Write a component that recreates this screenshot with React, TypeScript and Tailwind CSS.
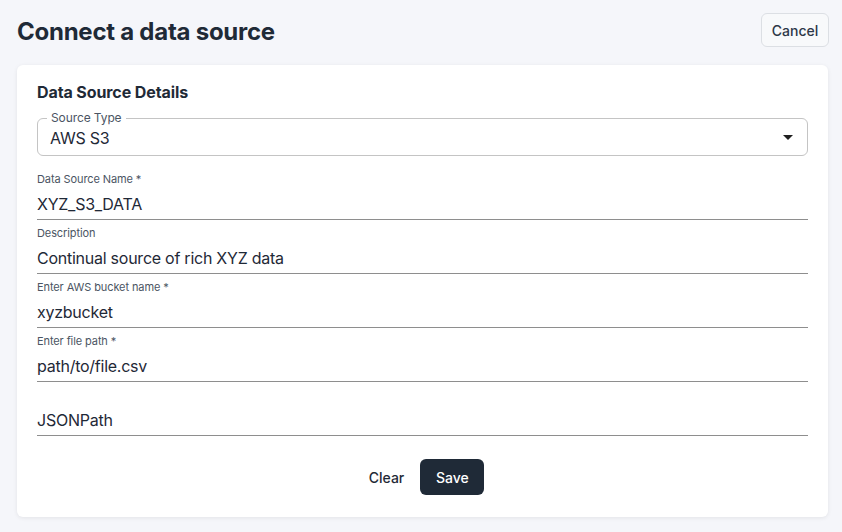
import { useState } from "react";

function Field({ label, value, required, placeholder }: { label?: string; value: string; required?: boolean; placeholder?: string }) {
    const [val, setVal] = useState(value);
    return (
        <div className="h-[54px] pt-[6px] flex flex-col">
            <div className="h-[14px] text-[11px] leading-[14px] tracking-[-0.1px] text-[#4b5563]">
                {label}{required && <span> *</span>}
            </div>
            <input
                value={val}
                placeholder={placeholder}
                onChange={(e) => setVal(e.target.value)}
                className="h-[34px] pt-[3px] w-full bg-transparent text-[16px] tracking-[-0.25px] text-[#1f2937] placeholder:text-[#1f2937] border-b border-[#8e8e8e] focus:outline-none"
            />
        </div>
    );
}

export default function App() {
    return (
        <div className="min-h-screen bg-[#f5f6fa] pl-[17px] pr-[13px] pt-[13px] pb-[15px] font-['Inter',sans-serif] text-[#1f2a37]">
            <div className="flex items-center justify-between h-[34px]">
                <h1 className="text-[24px] font-bold tracking-[-0.25px] mt-[3px]">Connect a data source</h1>
                <button className="h-[34px] w-[68px] border border-[#dcdfe4] rounded-md bg-[#f8f9fb] text-[14px] font-medium text-[#2d3748]">
                    Cancel
                </button>
            </div>

            <div className="mt-[18px] bg-white rounded-md shadow-[0_1px_4px_rgba(0,0,0,0.08)] mr-px px-5 pt-[15px] pb-[22px]">
                <h2 className="text-[16px] leading-6 font-bold tracking-[-0.1px]">Data Source Details</h2>

                <div className="relative mt-[14px] h-[38px] border border-[#c4c4c4] rounded-md flex items-center justify-between pl-3 pr-[14px]">
                    <span className="absolute -top-[8px] left-[9px] bg-white px-[4px] text-[12px] leading-[14px] tracking-[-0.1px] text-[#4b5563]">Source Type</span>
                    <span className="text-[16px] tracking-[-0.25px] text-[#1f2937] mt-[1px]">AWS S3</span>
                    <svg width="10" height="5" viewBox="0 0 10 5" className="mt-[1px]">
                        <path d="M0 0h10L5 5z" fill="#1f1f1f" />
                    </svg>
                </div>

                <div className="mt-[10px]">
                    <Field label="Data Source Name" required value="XYZ_S3_DATA" />
                    <Field label="Description" value="Continual source of rich XYZ data" />
                    <Field label="Enter AWS bucket name" required value="xyzbucket" />
                    <Field label="Enter file path" required value="path/to/file.csv" />
                    <Field value="" placeholder="JSONPath" />
                </div>

                <div className="mt-[23px] pl-2 flex justify-center items-center gap-4">
                    <button className="h-9 text-[14px] font-medium text-[#1f2a37]">Clear</button>
                    <button className="h-9 w-16 rounded-md bg-[#1f2a37] text-white text-[14px] font-medium">Save</button>
                </div>
            </div>
        </div>
    );
}
